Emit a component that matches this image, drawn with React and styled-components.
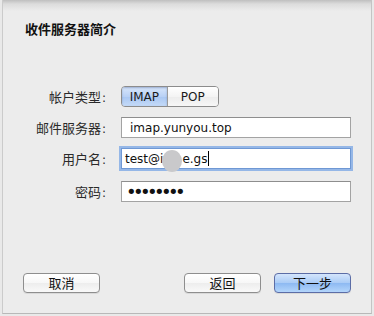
import React from 'react';
import styled, { createGlobalStyle } from 'styled-components';

const GlobalStyle = createGlobalStyle`
  html, body {
    margin: 0;
    padding: 0;
    background: #e9e9e9;
  }
  body {
    font-family: "DejaVu Sans", "Noto Sans CJK SC", sans-serif;
  }
`;

const Sheet = styled.div`
  box-sizing: border-box;
  margin-left: 2px;
  width: 370px;
  height: 314px;
  display: flex;
  flex-direction: column;
  background: linear-gradient(#bfbfbf 0px, #dcdcdc 4px, #ececec 11px);
  border-left: 1px solid #cbcbcb;
  border-right: 1px solid #c4c4c4;
  border-bottom: 1px solid #b8b8b8;
  padding-top: 21px;
`;

const Title = styled.h1`
  margin: 0 0 0 22px;
  font-family: "Noto Sans CJK SC", sans-serif;
  font-size: 13px;
  line-height: 16px;
  font-weight: 700;
  color: #111;
`;

const Form = styled.div`
  display: grid;
  grid-template-columns: 103px 230px;
  column-gap: 15px;
  margin-top: 49px;
`;

const Label = styled.div`
  text-align: right;
  font-family: "Noto Sans CJK SC", sans-serif;
  font-size: 13px;
  color: #2a2a2a;
  height: ${(p) => p.$h}px;
  line-height: ${(p) => p.$h}px;
  margin-bottom: ${(p) => p.$gap}px;

  span {
    font-family: "DejaVu Sans", sans-serif;
    font-size: 12px;
    margin-left: 1px;
  }
`;

const Segmented = styled.div`
  display: flex;
  width: 98px;
  height: 21px;
  box-sizing: border-box;
  border: 1px solid #8c8c8c;
  border-radius: 4px;
  overflow: hidden;
  margin-bottom: 10px;
`;

const Segment = styled.div`
  width: ${(p) => p.$w}px;
  display: flex;
  align-items: center;
  justify-content: center;
  font-size: 12px;
  color: #1a1a1a;
  background: ${(p) =>
    p.$active
      ? 'linear-gradient(#d8e6fa, #b9d1f5 50%, #a9c7f2 51%, #c4daf8)'
      : 'linear-gradient(#ffffff, #f4f4f4 50%, #ececec 51%, #f7f7f7)'};
  box-shadow: ${(p) => (p.$active ? 'inset 0 1px 2px rgba(40,70,130,0.35)' : 'none')};
  & + & {
    border-left: 1px solid #9a9a9a;
  }
`;

const Field = styled.div`
  position: relative;
  box-sizing: border-box;
  height: 21px;
  display: flex;
  align-items: center;
  padding-left: ${(p) => (p.$pad ? p.$pad : 8)}px;
  background: #fff;
  border: 1px solid ${(p) => (p.$focus ? '#6f98d4' : '#a3a3a3')};
  border-top-color: ${(p) => (p.$focus ? '#6f98d4' : '#8e8e8e')};
  box-shadow: ${(p) => (p.$focus ? '0 0 0 2px rgba(120,165,230,0.75)' : 'none')};
  font-size: 12px;
  color: #111;
  margin-bottom: ${(p) => p.$gap}px;
`;

const Blur = styled.span`
  position: relative;
  display: inline-block;
  width: 19px;
  height: 14px;

  &::after {
    content: '';
    position: absolute;
    left: -1px;
    top: -2px;
    width: 20px;
    height: 22px;
    border-radius: 50%;
    background: #c9c9cb;
  }
`;

const Caret = styled.span`
  display: inline-block;
  width: 1px;
  height: 15px;
  margin-left: 1px;
  background: #000;
`;

const Dots = styled.span`
  font-size: 18px;
  letter-spacing: -3.6px;
  line-height: 1;
`;

const Footer = styled.div`
  margin-top: auto;
  display: flex;
  gap: 13px;
  padding: 0 20px 20px 20px;
`;

const Button = styled.button`
  width: 77px;
  height: 20px;
  padding: 0;
  box-sizing: border-box;
  font-family: "Noto Sans CJK SC", sans-serif;
  font-size: 13px;
  line-height: 18px;
  color: #111;
  border-radius: 4px;
  border: 1px solid ${(p) => (p.$primary ? '#5c6da6' : '#8e8e8e')};
  background: ${(p) =>
    p.$primary
      ? 'linear-gradient(#d4e5fc, #a9cbf6 50%, #8db9f2 51%, #b3d5fb)'
      : 'linear-gradient(#ffffff, #f7f7f7 50%, #ededed 51%, #f9f9f9)'};
  box-shadow: 0 1px 0 rgba(0, 0, 0, 0.08);
  &:first-child {
    margin-right: auto;
  }
`;

export default function App() {
  return (
    <>
      <GlobalStyle />
      <Sheet>
        <Title>收件服务器简介</Title>
        <Form>
          <Label $h={21} $gap={10}>帐户类型<span>:</span></Label>
          <Segmented>
            <Segment $w={46} $active>IMAP</Segment>
            <Segment $w={52}>POP</Segment>
          </Segmented>

          <Label $h={21} $gap={10}>邮件服务器<span>:</span></Label>
          <Field $gap={10}>imap.yunyou.top</Field>

          <Label $h={21} $gap={12}>用户名<span>:</span></Label>
          <Field $gap={12} $focus $pad={3}>
            test@i<Blur />e.gs<Caret />
          </Field>

          <Label $h={21} $gap={0}>密码<span>:</span></Label>
          <Field $gap={0} $pad={4}>
            <Dots>••••••••</Dots>
          </Field>
        </Form>
        <Footer>
          <Button>取消</Button>
          <Button>返回</Button>
          <Button $primary>下一步</Button>
        </Footer>
      </Sheet>
    </>
  );
}
